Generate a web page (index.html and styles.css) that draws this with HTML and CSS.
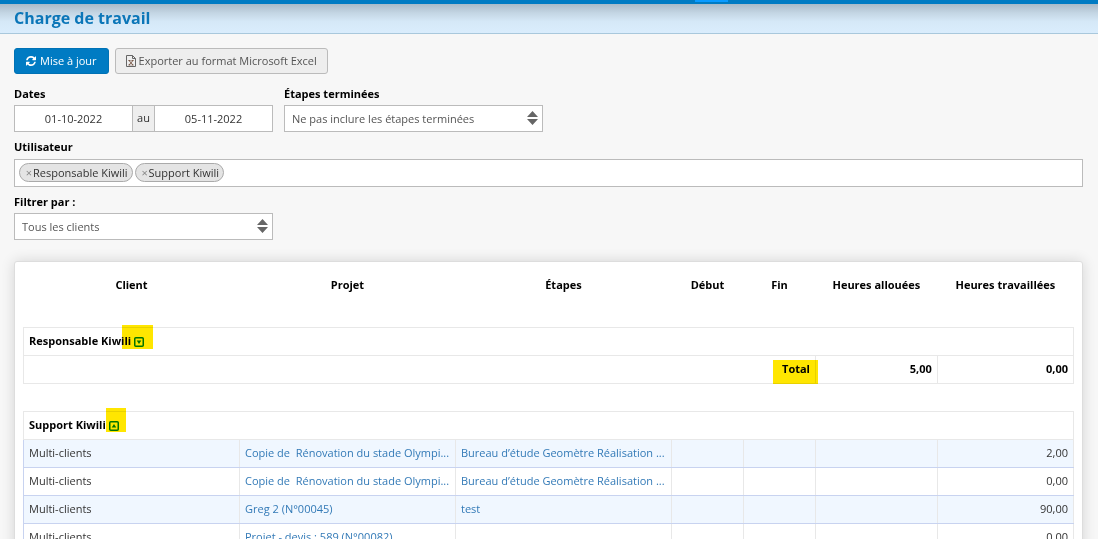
FILE: index.html
```html
<!DOCTYPE html>
<html lang="fr">
<head>
<meta charset="utf-8">
<meta name="viewport" content="width=device-width, initial-scale=1">
<title>Charge de travail</title>
<link rel="stylesheet" href="styles.css">
</head>
<body>
<div class="topbar"><span class="topbar-tab"></span></div>
<header class="page-head"><h1 class="page-title">Charge de travail</h1></header>
<main class="content">
  <div class="actions">
    <button class="btn btn-primary" type="button">
      <svg class="icon-refresh" viewBox="0 0 1536 1536" aria-hidden="true"><path fill="currentColor" d="M1511 928q0 5-1 7-64 268-268 434.500T764 1536q-146 0-282.500-55T238 1324l-129 129q-19 19-45 19t-45-19-19-45V960q0-26 19-45t45-19h448q26 0 45 19t19 45-19 45l-137 137q71 66 161 102t187 36q134 0 250-65t186-179q11-17 53-117 8-23 30-23h192q13 0 22.500 9.500t9.500 22.500zm25-800v448q0 26-19 45t-45 19h-448q-26 0-45-19t-19-45 19-45l138-138Q969 256 768 256q-134 0-250 65T332 500q-11 17-53 117-8 23-30 23H50q-13 0-22.500-9.500T18 608v-7q65-268 270-434.500T768 0q146 0 284 55.500T1297 212l130-129q19-19 45-19t45 19 19 45z"/></svg>
      Mise à jour</button>
    <button class="btn btn-default" type="button">
      <svg class="icon-excel" viewBox="0 0 10 12" aria-hidden="true"><path fill="none" stroke="currentColor" d="M.5.5h6l3 3v8h-9zM6.500.5v3h3"/><path fill="none" stroke="#7a5a4a" d="M3 5.500l4 4.500M7 5.500l-4 4.500M2.500 5.500h2M5.500 5.500h2M2.500 10h2M5.500 10h2"/></svg>
      Exporter au format Microsoft Excel</button>
  </div>
  <form class="filters">
    <div class="filter-row">
      <div class="field">
        <label class="label" for="start">Dates</label>
        <div class="date-range">
          <input class="date" id="start" type="text" value="01-10-2022">
          <span class="addon">au</span>
          <input class="date" type="text" value="05-11-2022" aria-label="Date de fin">
        </div>
      </div>
      <div class="field">
        <label class="label" for="steps">Étapes terminées</label>
        <div class="select-wrap">
          <select class="select" id="steps"><option>Ne pas inclure les étapes terminées</option></select>
          <svg class="arrows" viewBox="0 0 11 14" aria-hidden="true"><path fill="#666" d="M0 6L5.500 0 11 6zM0 8h11l-5.500 6z"/></svg>
        </div>
      </div>
    </div>
    <div class="field-wide">
      <label class="label" for="users">Utilisateur</label>
      <div class="tags">
        <span class="tag"><button class="tag-x" type="button" aria-label="Retirer Responsable Kiwili">×</button>Responsable Kiwili</span>
        <span class="tag"><button class="tag-x" type="button" aria-label="Retirer Support Kiwili">×</button>Support Kiwili</span>
        <input class="tag-input" id="users" type="text">
      </div>
    </div>
    <div class="field">
      <label class="label" for="clients">Filtrer par :</label>
      <div class="select-wrap">
        <select class="select" id="clients"><option>Tous les clients</option></select>
        <svg class="arrows" viewBox="0 0 11 14" aria-hidden="true"><path fill="#666" d="M0 6L5.500 0 11 6zM0 8h11l-5.500 6z"/></svg>
      </div>
    </div>
  </form>
  <section class="card">
    <table class="report">
      <colgroup><col class="c-wide"><col class="c-wide"><col class="c-wide"><col class="c-date"><col class="c-date"><col class="c-alloc"><col></colgroup>
      <thead>
        <tr><th>Client</th><th>Projet</th><th>Étapes</th><th>Début</th><th>Fin</th><th>Heures allouées</th><th>Heures travaillées</th></tr>
      </thead>
      <tbody>
        <tr class="spacer"><td colspan="7"></td></tr>
        <tr class="group"><th colspan="7" scope="rowgroup"><span class="marked">Responsable Kiwili <button class="toggle" type="button" aria-label="Déplier"><svg class="icon-toggle" viewBox="0 0 10 10" aria-hidden="true"><rect x=".75" y=".75" width="8.500" height="8.500" rx="1" fill="none" stroke="currentColor" stroke-width="1.500"/><path fill="currentColor" d="M2.700 3.500h4.600L5 7z"/></svg></button><span class="mark mark-open"></span></span></th></tr>
        <tr class="total"><td colspan="5"><span class="marked">Total<span class="mark mark-total"></span></span></td><td>5,00</td><td>0,00</td></tr>
      </tbody>
      <tbody>
        <tr class="spacer"><td colspan="7"></td></tr>
        <tr class="group"><th colspan="7" scope="rowgroup"><span class="marked">Support Kiwili <button class="toggle" type="button" aria-label="Replier"><svg class="icon-toggle" viewBox="0 0 10 10" aria-hidden="true"><rect x=".75" y=".75" width="8.500" height="8.500" rx="1" fill="none" stroke="currentColor" stroke-width="1.500"/><path fill="currentColor" d="M2.700 6.500h4.600L5 3z"/></svg></button><span class="mark mark-close"></span></span></th></tr>
        <tr class="item tinted"><td>Multi-clients</td><td><a href="#">Copie de&nbsp; Rénovation du stade Olympi...</a></td><td><a href="#">Bureau d’étude Geomètre Réalisation ...</a></td><td></td><td></td><td></td><td class="num">2,00</td></tr>
        <tr class="item"><td>Multi-clients</td><td><a href="#">Copie de&nbsp; Rénovation du stade Olympi...</a></td><td><a href="#">Bureau d’étude Geomètre Réalisation ...</a></td><td></td><td></td><td></td><td class="num">0,00</td></tr>
        <tr class="item tinted"><td>Multi-clients</td><td><a href="#">Greg 2 (N°00045)</a></td><td><a href="#">test</a></td><td></td><td></td><td></td><td class="num">90,00</td></tr>
        <tr class="item"><td>Multi-clients</td><td><a href="#">Projet - devis : 589 (N°00082)</a></td><td></td><td></td><td></td><td></td><td class="num">0,00</td></tr>
      </tbody>
    </table>
  </section>
</main>
</body>
</html>
```
FILE: styles.css
```css
* { box-sizing: border-box; }
html { scrollbar-width: none; }
body {
  margin: 0;
  background: #f7f7f7;
  color: #333;
  font: 11px/16px "Open Sans", "Noto Sans", sans-serif;
}
button, input, select { font: inherit; color: inherit; }

.topbar { position: relative; height: 4px; background: #007bc3; }
.topbar-tab {
  position: absolute;
  left: 63.3%;
  top: 0;
  width: 33px;
  height: 2px;
  background: #0a9bff;
}
.page-head {
  height: 30px;
  padding: 0 14px;
  border-bottom: 1px solid #a9c8dc;
  background: linear-gradient(#a9bac8, #c3d5e3 30%, #d5e8f7 60%, #daedfd);
}
.page-title { margin: 0; color: #0b76b8; font-size: 16px; line-height: 28px; font-weight: 700; }

.content { padding: 14px 15px 24px 14px; }
.actions { display: flex; gap: 6px; margin-bottom: 12px; }
.btn {
  display: flex;
  align-items: center;
  gap: 4px;
  height: 26px;
  padding: 0 11px;
  border: 1px solid;
  border-radius: 3px;
}
.btn-primary { border-color: #0072b5; background: #007bc3; color: #fff; font-weight: 500; }
.btn-default { padding: 0 10px; gap: 3px; border-color: #bbb; background: #eee; color: #555; }
.icon-refresh { width: 10px; height: 10px; }
.icon-excel { width: 10px; height: 12px; color: #666; }

.filter-row { display: flex; gap: 11px; margin-bottom: 7px; }
.field { width: 259px; }
.field-wide { margin-bottom: 7px; }
.label { display: block; margin-bottom: 3px; color: #000; font-weight: 700; }
.field-wide .label { margin-bottom: 4px; }
.date-range { display: flex; height: 27px; border: 1px solid #bbb; background: #fff; }
.date { flex: 1; min-width: 0; padding: 0; border: 0; background: #fff; text-align: center; }
.addon {
  width: 23px;
  border: solid #bbb;
  border-width: 0 1px;
  background: #eee;
  line-height: 24px;
  text-align: center;
}
.select-wrap { position: relative; }
.select {
  display: block;
  width: 100%;
  height: 27px;
  padding: 0 24px 0 7px;
  border: 1px solid #bbb;
  border-radius: 0;
  background: #fff;
  color: #555;
  appearance: none;
}
.arrows { position: absolute; right: 5px; top: 6px; width: 11px; height: 14px; pointer-events: none; }
.tags {
  display: flex;
  align-items: center;
  gap: 2px;
  height: 28px;
  padding: 0 4px 1px;
  border: 1px solid #bbb;
  background: #fff;
}
.tag {
  display: flex;
  align-items: center;
  height: 19px;
  padding: 0 4px 0 5px;
  border: 1px solid #aaa;
  border-radius: 10px;
  background: #e4e4e4;
}
.tag-x { width: 8px; padding: 0; border: 0; background: none; color: #888; line-height: 16px; }
.tag-input { flex: 1; min-width: 0; border: 0; outline: 0; background: none; }

.card {
  margin-top: 21px;
  padding: 9px 8px 24px;
  border: 1px solid #ddd;
  border-radius: 3px;
  background: #fff;
  box-shadow: 0 0 14px rgba(0, 0, 0, 0.14);
}
.report { width: 100%; border-collapse: collapse; table-layout: fixed; }
.c-wide { width: 20.57%; }
.c-date { width: 6.86%; }
.c-alloc { width: 11.6%; }
.report th, .report td { height: 28px; padding: 0 5px; white-space: nowrap; }
.report th { color: #000; font-weight: 700; }
.spacer { height: 28px; }
.group th { border: 1px solid #e8e8e8; text-align: left; }
.total td { border: 1px solid #e8e8e8; color: #000; font-weight: 700; text-align: right; }
.item td { border: solid #c8d3f0; border-width: 0 1px 1px; border-right-color: #e8e8e8; }
.item td + td { border-left-color: #e8e8e8; }
.tinted { background: #f0f7ff; }
.item .num { text-align: right; }
.item a { color: #337ab7; text-decoration: none; }

.marked { position: relative; }
.toggle { padding: 0; border: 0; background: none; color: #008000; line-height: 10px; vertical-align: -2px; }
.icon-toggle { display: block; width: 10px; height: 10px; }
.mark { position: absolute; background: #ffe600; mix-blend-mode: multiply; }
.mark-open { right: -9px; top: -8px; width: 31px; height: 24px; }
.mark-close { right: -7px; top: -9px; width: 20px; height: 24px; }
.mark-total { right: -8px; top: -1px; width: 45px; height: 24px; }
```
